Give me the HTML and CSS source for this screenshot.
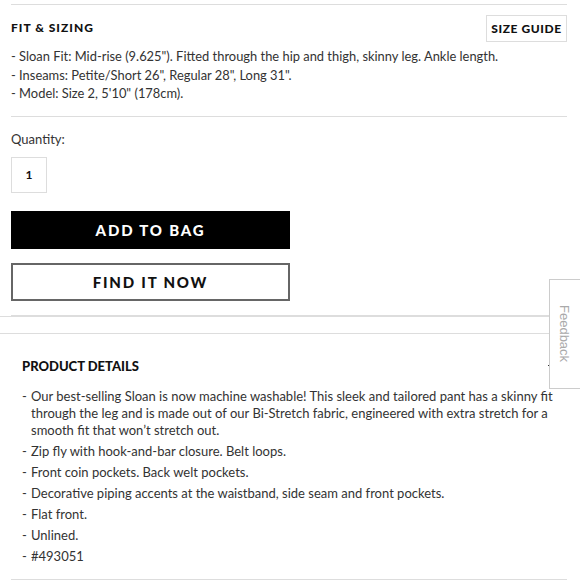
FILE: index.html
```html
<!DOCTYPE html>
<html>
<head>
<meta charset="utf-8">
<link rel="stylesheet" href="styles.css">
</head>
<body>
<div class="fit">
  <div class="fit-head">
    <h2 class="fit-title">FIT &amp; SIZING</h2>
    <button class="size-guide">SIZE GUIDE</button>
  </div>
  <ul class="fit-list">
    <li>- Sloan Fit: Mid-rise (9.625"). Fitted through the hip and thigh, skinny leg. Ankle length.</li>
    <li>- Inseams: Petite/Short 26", Regular 28", Long 31".</li>
    <li>- Model: Size 2, 5'10" (178cm).</li>
  </ul>
  <div class="qty">
    <div class="qty-label">Quantity:</div>
    <div class="qty-box">1</div>
  </div>
  <button class="btn btn-primary">ADD TO BAG</button>
  <button class="btn btn-secondary">FIND IT NOW</button>
</div>
<div class="divider"></div>
<section class="details">
  <div class="details-head">
    <h2 class="details-title">PRODUCT DETAILS</h2>
    <span class="toggle"></span>
  </div>
  <ul class="details-list">
    <li>Our best-selling Sloan is now machine washable! This sleek and tailored pant has a skinny fit through the leg and is made out of our Bi-Stretch fabric, engineered with extra stretch for a smooth fit that won’t stretch out.</li>
    <li>Zip fly with hook-and-bar closure. Belt loops.</li>
    <li>Front coin pockets. Back welt pockets.</li>
    <li>Decorative piping accents at the waistband, side seam and front pockets.</li>
    <li>Flat front.</li>
    <li>Unlined.</li>
    <li>#493051</li>
  </ul>
</section>
<div class="bottom-rule"></div>
<div class="feedback"><span>Feedback</span></div>
</body>
</html>
```
FILE: styles.css
```css
html, body {
  margin: 0;
  padding: 0;
  background: #fff;
}
body {
  font-family: "Lato", "Liberation Sans", sans-serif;
  color: #333;
  font-size: 13px;
}
.fit {
  margin: 4px 13px 0 11px;
  border-top: 1px solid #ddd;
  padding-bottom: 14px;
  border-bottom: 1px solid #ddd;
}
.fit-head {
  display: flex;
  justify-content: space-between;
  align-items: center;
  margin-top: 10px;
  height: 27px;
}
.fit-title {
  margin: 0;
  font-size: 12px;
  font-weight: 900;
  letter-spacing: 1px;
  color: #111;
  position: relative;
  top: -1px;
}
.size-guide {
  font-family: inherit;
  background: #fff;
  border: 1px solid #ddd;
  height: 27px;
  width: 81px;
  padding: 0;
  font-size: 12px;
  font-weight: 900;
  letter-spacing: 0.6px;
  color: #111;
}
.fit-list {
  list-style: none;
  margin: 5px 0 0;
  padding: 0;
  line-height: 18.5px;
  font-size: 12.9px;
}
.qty {
  border-top: 1px solid #ddd;
  margin-top: 13px;
  padding-top: 13px;
}
.qty-label {
  line-height: 18px;
}
.qty-box {
  margin-top: 9px;
  width: 34px;
  height: 34px;
  border: 1px solid #ddd;
  display: flex;
  align-items: center;
  justify-content: center;
  font-size: 12px;
  font-weight: 700;
  color: #111;
}
.btn {
  display: flex;
  align-items: center;
  justify-content: center;
  width: 279px;
  height: 38px;
  padding: 0;
  font-family: inherit;
  font-size: 15px;
  font-weight: 900;
  letter-spacing: 1.8px;
  box-sizing: border-box;
}
.btn-primary {
  margin-top: 18px;
  background: #000;
  color: #fff;
  border: none;
}
.btn-secondary {
  margin-top: 14px;
  background: #fff;
  color: #111;
  border: 2px solid #666;
}
.divider {
  height: 0;
  border-top: 1px solid #ddd;
}
.details {
  margin-top: 16px;
  border-top: 1px solid #ddd;
  padding: 24px 22px 14px;
}
.details-head {
  display: flex;
  justify-content: space-between;
  align-items: center;
  height: 16px;
}
.details-title {
  margin: 0;
  font-size: 13px;
  font-weight: 900;
  color: #111;
  letter-spacing: 0;
}
.toggle {
  width: 10px;
  height: 1px;
  background: #333;
}
.details-list {
  list-style: none;
  margin: 14px 0 0;
  padding: 0 0 0 9px;
  line-height: 17px;
}
.details-list li {
  position: relative;
  margin-bottom: 4px;
}
.details-list li:last-child {
  margin-bottom: 0;
}
.details-list li::before {
  content: "-";
  position: absolute;
  left: -9px;
}
.bottom-rule {
  margin: 0 13px 0 11px;
  border-top: 1px solid #ddd;
}
.feedback {
  position: fixed;
  top: 279px;
  left: 549px;
  width: 40px;
  height: 110px;
  background: #fff;
  border: 1px solid #ccc;
  box-sizing: border-box;
}
.feedback span {
  position: absolute;
  left: 7px;
  top: 25px;
  writing-mode: vertical-rl;
  font-family: "Liberation Sans", sans-serif;
  font-size: 13px;
  color: #aaa;
}
```
